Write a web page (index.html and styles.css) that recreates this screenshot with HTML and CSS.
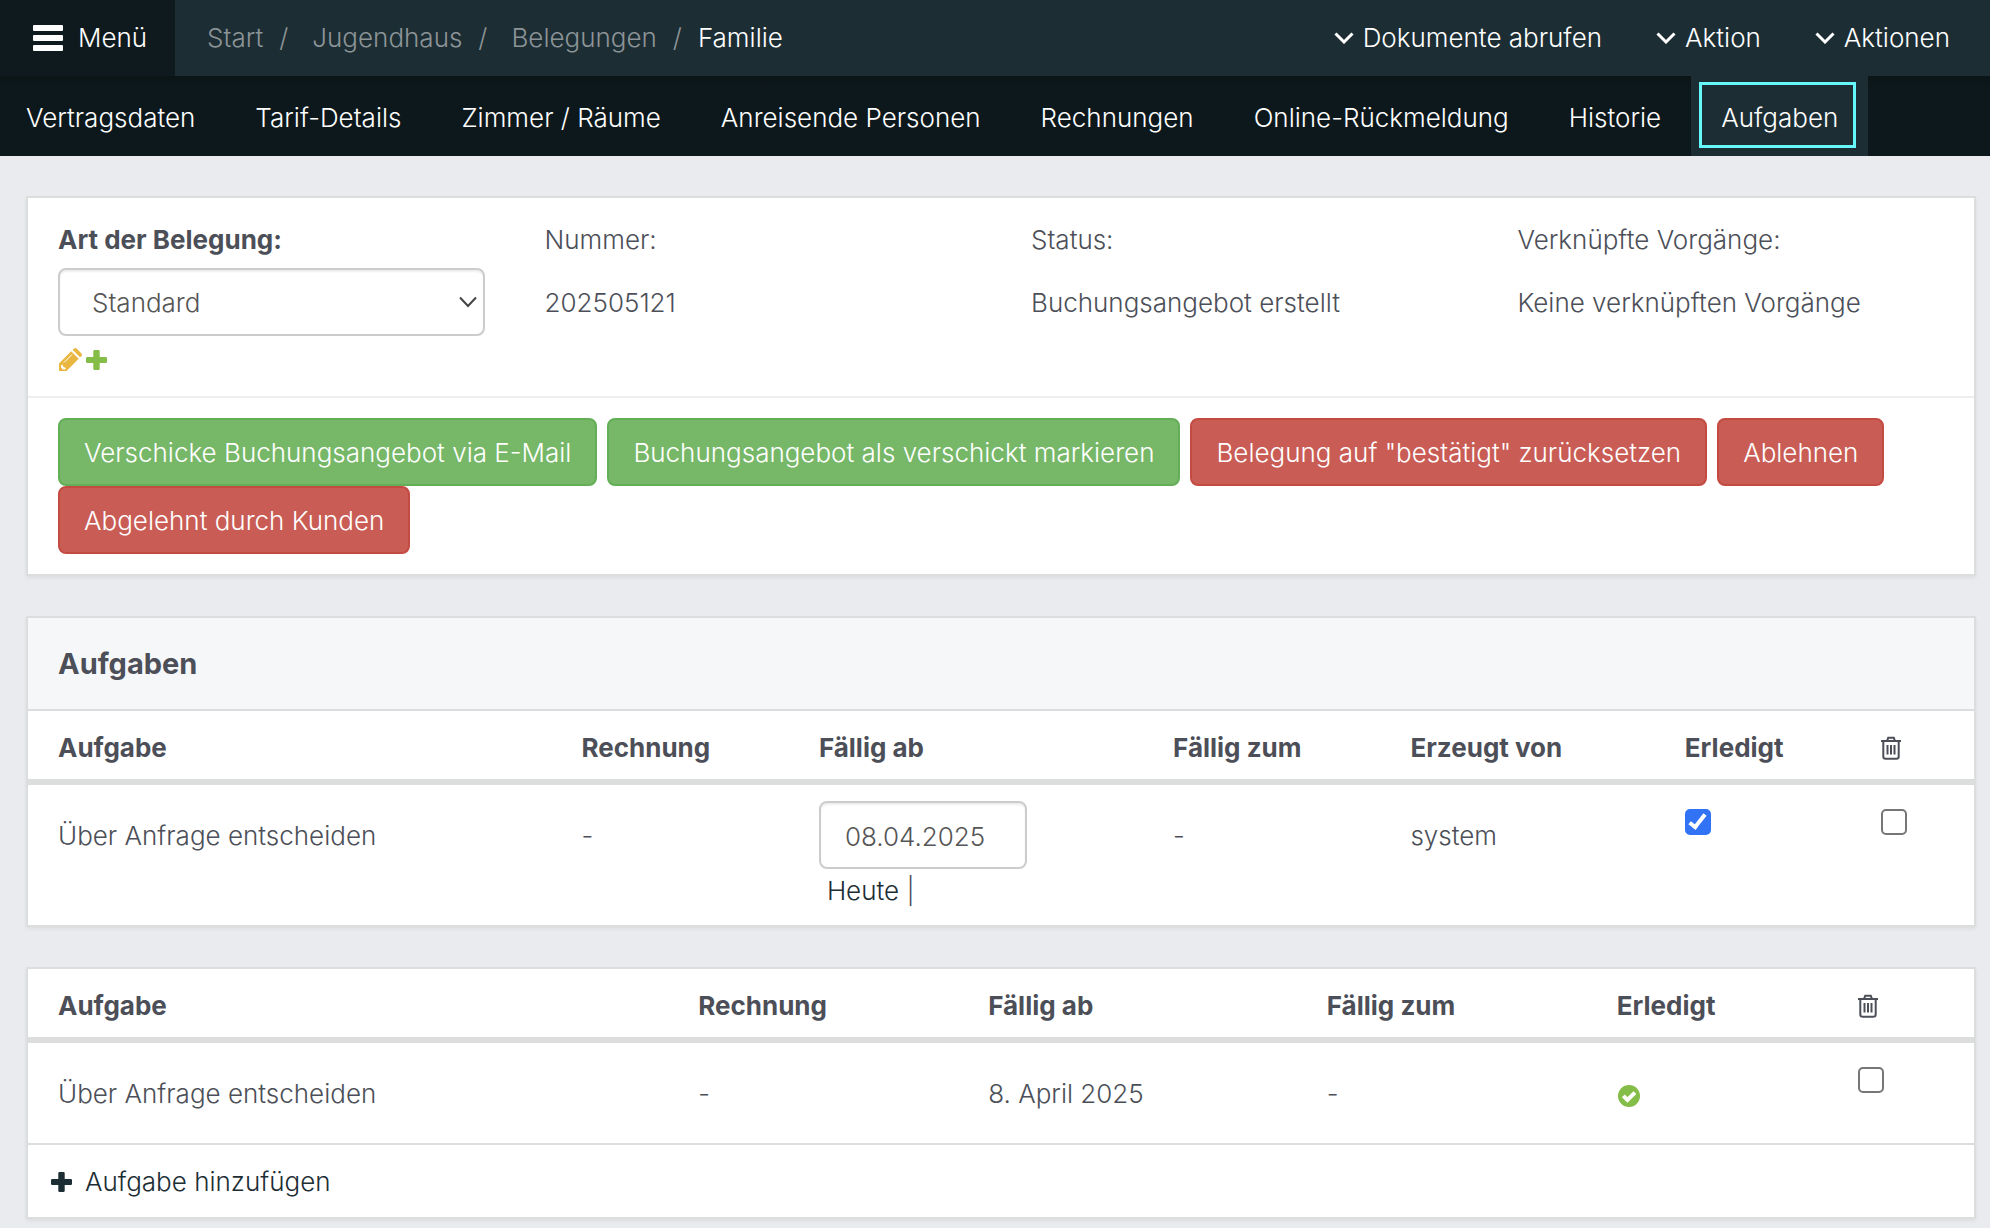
FILE: index.html
```html
<!DOCTYPE html>
<html lang="de">
<head>
  <meta charset="UTF-8" />
  <meta name="viewport" content="width=device-width, initial-scale=1.0" />
  <title>Familie – Aufgaben</title>
  <link rel="stylesheet" href="styles.css">
</head>
<body>
  <header class="topbar">
    <button type="button" class="menu-button">
      <svg class="icon-menu" viewBox="0 0 30 26">
        <path d="M1 0h28q1 0 1 1v4q0 1-1 1H1q-1 0-1-1V1q0-1 1-1zM1 10h28q1 0 1 1v4q0 1-1 1H1q-1 0-1-1v-4q0-1 1-1zM1 20h28q1 0 1 1v4q0 1-1 1H1q-1 0-1-1v-4q0-1 1-1z"/>
      </svg>
      Menü
    </button>
    <nav class="breadcrumb" aria-label="Brotkrumen">
      <a href="#">Start</a><span class="sep">/</span>
      <a href="#">Jugendhaus</a><span class="sep">/</span>
      <a href="#">Belegungen</a><span class="sep sep-last">/</span>
      <span class="current">Familie</span>
    </nav>
    <div class="actions">
      <button type="button" class="action">
        <svg class="icon-chevron" viewBox="0 0 20 12"><path d="M1.500 1.500L10 10l8.500-8.500"/></svg>
        Dokumente abrufen
      </button>
      <button type="button" class="action">
        <svg class="icon-chevron" viewBox="0 0 20 12"><path d="M1.500 1.500L10 10l8.500-8.500"/></svg>
        Aktion
      </button>
      <button type="button" class="action">
        <svg class="icon-chevron" viewBox="0 0 20 12"><path d="M1.500 1.500L10 10l8.500-8.500"/></svg>
        Aktionen
      </button>
    </div>
  </header>

  <nav class="tabs" aria-label="Belegung">
    <div class="tab"><a href="#">Vertragsdaten</a></div>
    <div class="tab"><a href="#">Tarif-Details</a></div>
    <div class="tab"><a href="#">Zimmer / Räume</a></div>
    <div class="tab"><a href="#">Anreisende Personen</a></div>
    <div class="tab"><a href="#">Rechnungen</a></div>
    <div class="tab"><a href="#">Online-Rückmeldung</a></div>
    <div class="tab"><a href="#">Historie</a></div>
    <div class="tab active"><a href="#">Aufgaben</a></div>
  </nav>

  <main class="content">
    <section class="panel">
      <div class="facts">
        <div class="fact">
          <label class="fact-label strong" for="art">Art der Belegung:</label>
          <div class="select-wrap">
            <select id="art" class="field">
              <option>Standard</option>
            </select>
            <svg class="select-arrow" viewBox="0 0 18 12"><path d="M1 1.500l8 8.500 8-8.500"/></svg>
          </div>
          <div class="fact-icons">
            <a href="#" aria-label="Bearbeiten">
              <svg class="icon-small icon-pencil" viewBox="0 0 24 24">
                <path d="M1 15.500L13.200 3.300l7.500 7.500L8.500 23H1z"/>
                <path d="M14.700 1.900L16 .600q1.300-1.200 2.600 0l4.800 4.800q1.200 1.300 0 2.600l-1.300 1.300z"/>
                <path class="detail" d="M6 14.500L14 6.500"/>
                <path class="detail-tip" d="M3 17.500l1.500-1 1 2.500 2.500 1-1 1.500H5L3 19.500z"/>
              </svg>
            </a>
            <a href="#" aria-label="Hinzufügen">
              <svg class="icon-small icon-add" viewBox="0 0 24 24">
                <path d="M9.500 2h4q1.200 0 1.200 1.200V9h6.100Q22 9 22 10.200v3.600Q22 15 20.800 15h-6.100v5.800q0 1.200-1.200 1.200h-4q-1.200 0-1.200-1.200V15H2.200Q1 15 1 13.800v-3.600Q1 9 2.200 9h6.100V3.200Q8.300 2 9.500 2z"/>
              </svg>
            </a>
          </div>
        </div>
        <div class="fact">
          <div class="fact-label">Nummer:</div>
          <div class="fact-value">202505121</div>
        </div>
        <div class="fact">
          <div class="fact-label">Status:</div>
          <div class="fact-value">Buchungsangebot erstellt</div>
        </div>
        <div class="fact">
          <div class="fact-label">Verknüpfte Vorgänge:</div>
          <div class="fact-value">Keine verknüpften Vorgänge</div>
        </div>
      </div>
      <div class="buttons">
        <button type="button" class="btn btn-success">Verschicke Buchungsangebot via E-Mail</button>
        <button type="button" class="btn btn-success">Buchungsangebot als verschickt markieren</button>
        <button type="button" class="btn btn-danger">Belegung auf "bestätigt" zurücksetzen</button>
        <button type="button" class="btn btn-danger">Ablehnen</button>
        <button type="button" class="btn btn-danger">Abgelehnt durch Kunden</button>
      </div>
    </section>

    <section class="panel">
      <h2 class="panel-title">Aufgaben</h2>
      <table class="tasks tasks-open">
        <thead>
          <tr>
            <th>Aufgabe</th>
            <th>Rechnung</th>
            <th>Fällig ab</th>
            <th>Fällig zum</th>
            <th>Erzeugt von</th>
            <th>Erledigt</th>
            <th aria-label="Löschen">
              <svg class="icon-trash" viewBox="0 0 20 24">
                <path d="M0 5h20M6 5l1.200-3.200h5.600L14 5M2.300 5v15.500q0 2.300 2.300 2.300h10.800q2.300 0 2.300-2.300V5M6.500 9v9.500M10 9v9.500M13.500 9v9.500"/>
              </svg>
            </th>
          </tr>
        </thead>
        <tbody>
          <tr>
            <td>Über Anfrage entscheiden</td>
            <td>-</td>
            <td class="cell-field">
              <input type="text" class="field field-date" value="08.04.2025" aria-label="Fällig ab">
              <div class="shortcuts"><a href="#">Heute</a> |</div>
            </td>
            <td>-</td>
            <td>system</td>
            <td class="cell-check"><input type="checkbox" class="check" aria-label="Erledigt" checked></td>
            <td class="cell-check"><input type="checkbox" class="check" aria-label="Löschen"></td>
          </tr>
        </tbody>
      </table>
    </section>

    <section class="panel">
      <table class="tasks tasks-done">
        <thead>
          <tr>
            <th>Aufgabe</th>
            <th>Rechnung</th>
            <th>Fällig ab</th>
            <th>Fällig zum</th>
            <th>Erledigt</th>
            <th aria-label="Löschen">
              <svg class="icon-trash" viewBox="0 0 20 24">
                <path d="M0 5h20M6 5l1.200-3.200h5.600L14 5M2.300 5v15.500q0 2.300 2.300 2.300h10.800q2.300 0 2.300-2.300V5M6.500 9v9.500M10 9v9.500M13.500 9v9.500"/>
              </svg>
            </th>
          </tr>
        </thead>
        <tbody>
          <tr>
            <td>Über Anfrage entscheiden</td>
            <td>-</td>
            <td>8. April 2025</td>
            <td>-</td>
            <td>
              <svg class="icon-done" viewBox="0 0 24 24" role="img" aria-label="Ja">
                <circle cx="12" cy="12" r="11"/>
                <path d="M6.300 11.800l4.200 4.200 7.400-7.400"/>
              </svg>
            </td>
            <td class="cell-check"><input type="checkbox" class="check" aria-label="Löschen"></td>
          </tr>
        </tbody>
      </table>
      <div class="panel-footer">
        <a href="#" class="add-link">
          <svg class="icon-small" viewBox="0 0 24 24">
            <path d="M9.500 2h4q1.200 0 1.200 1.200V9h6.100Q22 9 22 10.200v3.600Q22 15 20.800 15h-6.100v5.800q0 1.200-1.200 1.200h-4q-1.200 0-1.200-1.200V15H2.200Q1 15 1 13.800v-3.600Q1 9 2.200 9h6.100V3.200Q8.300 2 9.500 2z"/>
          </svg>
          Aufgabe hinzufügen
        </a>
      </div>
    </section>
  </main>
</body>
</html>
```
FILE: styles.css
```css
* {
  box-sizing: border-box;
}

body {
  margin: 0;
  background: #e9ebee;
  color: #4c4f58;
  font-family: Inter, "Liberation Sans", sans-serif;
  font-size: 26px;
  font-weight: 300;
  line-height: 40px;
}

a {
  color: #1c2d34;
  text-decoration: none;
}

button,
input,
select {
  font: inherit;
  color: inherit;
}

svg {
  display: block;
  flex: none;
}

/* top bar */

.topbar {
  display: flex;
  align-items: stretch;
  height: 76px;
  background: #1c2d34;
  color: #fff;
}

.menu-button {
  display: flex;
  align-items: center;
  gap: 15px;
  padding: 0 28px 0 33px;
  border: 0;
  background: #0f1a1e;
}

.icon-menu {
  width: 30px;
  height: 26px;
  fill: #fff;
}

.breadcrumb {
  display: flex;
  align-items: center;
  padding-left: 32px;
  color: #8d9497;
}

.breadcrumb a {
  color: inherit;
}

.breadcrumb .sep {
  margin: 0 24px 0 16px;
}

.breadcrumb .sep-last {
  margin-right: 16px;
}

.breadcrumb .current {
  color: #fff;
}

.actions {
  display: flex;
  align-items: center;
  gap: 54px;
  margin-left: auto;
  padding-right: 40px;
}

.action {
  display: flex;
  align-items: center;
  gap: 9px;
  padding: 0;
  border: 0;
  background: none;
}

.icon-chevron {
  width: 20px;
  height: 12px;
  fill: none;
  stroke: #fff;
  stroke-width: 3;
}

/* tabs */

.tabs {
  display: flex;
  height: 80px;
  padding-right: 40px;
  background: linear-gradient(#0b1517, #0d181c 12px);
}

.tab {
  display: flex;
  align-items: center;
  padding: 0 15px 3px 11px;
}

.tab a {
  padding: 13px 15px 7px 19px;
  color: #fff;
  white-space: nowrap;
}

.tab:first-child a {
  padding-left: 15px;
}

.tab.active {
  background: #1c2d34;
}

.tab.active a {
  outline: 3px solid #66f7fb;
}

/* panels */

.content {
  display: flex;
  flex-direction: column;
  gap: 40px;
  padding: 40px 14px 8px 26px;
}

.panel {
  border: 2px solid #dcdddd;
  background: #fff;
  box-shadow: 0 2px 4px rgba(0, 0, 0, 0.06);
}

.panel-title {
  margin: 0;
  padding: 26px 30px 25px;
  border-bottom: 2px solid #dcdddd;
  background: #f6f7f9;
  font-size: 29px;
  font-weight: 700;
}

.facts {
  display: grid;
  grid-template-columns: repeat(4, 1fr);
  padding: 22px 0 24px;
  border-bottom: 2px solid #eee;
}

.fact {
  padding: 0 30px;
}

.fact-label {
  display: block;
  margin-bottom: 8px;
}

.fact-label.strong {
  font-weight: 700;
}

.fact-value {
  padding: 15px 0 13px;
}

.field {
  width: 100%;
  height: 68px;
  padding: 2px 24px 0;
  border: 2px solid #ccc;
  border-radius: 8px;
  background: #fff;
  box-shadow: inset 0 2px 2px rgba(0, 0, 0, 0.07);
  color: #555;
}

.select-wrap {
  position: relative;
}

.select-wrap .field {
  display: block;
  padding: 2px 32px 0;
  appearance: none;
}

.select-arrow {
  position: absolute;
  top: 28px;
  right: 8px;
  width: 18px;
  height: 12px;
  fill: none;
  stroke: #444;
  stroke-width: 2;
  pointer-events: none;
}

.fact-icons {
  display: flex;
  gap: 3px;
  padding-top: 12px;
}

.icon-small {
  width: 24px;
  height: 24px;
  fill: currentColor;
}

.icon-pencil {
  color: #e9b63f;
}

.icon-pencil .detail {
  fill: none;
  stroke: #fff;
  stroke-width: 1;
}

.icon-pencil .detail-tip {
  fill: #fff;
}

.icon-add {
  color: #84bd47;
}

.buttons {
  display: flex;
  flex-wrap: wrap;
  column-gap: 10px;
  padding: 20px 30px;
}

.btn {
  height: 68px;
  padding: 2px 24px 0;
  border: 2px solid;
  border-radius: 8px;
  color: #fff;
}

.btn-success {
  border-color: #64ae58;
  background: #76b768;
}

.btn-danger {
  border-color: #c44b42;
  background: #c95c55;
}

/* task tables */

.tasks {
  width: 100%;
  table-layout: fixed;
  border-collapse: collapse;
}

.tasks th {
  padding: 17px 0 11px 30px;
  border-bottom: 6px solid #dcdddd;
  font-weight: 700;
  text-align: left;
}

.tasks td {
  padding: 31px 0 29px 30px;
  vertical-align: top;
}

.tasks .cell-field {
  padding: 16px 0 14px 30px;
}

.tasks .cell-check {
  padding: 24px 0 0 30px;
}

.tasks-open th:nth-child(1) { width: 26.9%; }
.tasks-open th:nth-child(2) { width: 12.2%; }
.tasks-open th:nth-child(3) { width: 18.2%; }
.tasks-open th:nth-child(4) { width: 12.2%; }
.tasks-open th:nth-child(5) { width: 14.1%; }
.tasks-open th:nth-child(6) { width: 10.1%; }

.tasks-done th:nth-child(1) { width: 32.9%; }
.tasks-done th:nth-child(2) { width: 14.9%; }
.tasks-done th:nth-child(3) { width: 17.4%; }
.tasks-done th:nth-child(4) { width: 14.9%; }
.tasks-done th:nth-child(5) { width: 12.4%; }

.field-date {
  display: block;
  width: 208px;
}

.shortcuts {
  padding: 2px 0 0 8px;
}

.check {
  display: block;
  width: 26px;
  height: 26px;
  margin: 0;
  border: 2px solid #767676;
  border-radius: 5px;
  background: #fff;
  appearance: none;
}

.check:checked {
  border-color: #3273f6;
  background: #3273f6;
}

.check:checked::before {
  content: "";
  display: block;
  width: 5px;
  height: 14px;
  margin: 0 0 0 6px;
  border: solid #fff;
  border-width: 0 4px 4px 0;
  transform: rotate(38deg);
}

.icon-trash {
  width: 20px;
  height: 24px;
  fill: none;
  stroke: currentColor;
  stroke-width: 2;
}

.icon-done {
  width: 24px;
  height: 24px;
  margin-top: 10px;
  fill: #84bd47;
}

.icon-done path {
  fill: none;
  stroke: #fff;
  stroke-width: 4;
}

.panel-footer {
  padding: 17px 22px 15px;
  border-top: 2px solid #dcdddd;
}

.add-link {
  display: flex;
  align-items: center;
  gap: 11px;
}
```
